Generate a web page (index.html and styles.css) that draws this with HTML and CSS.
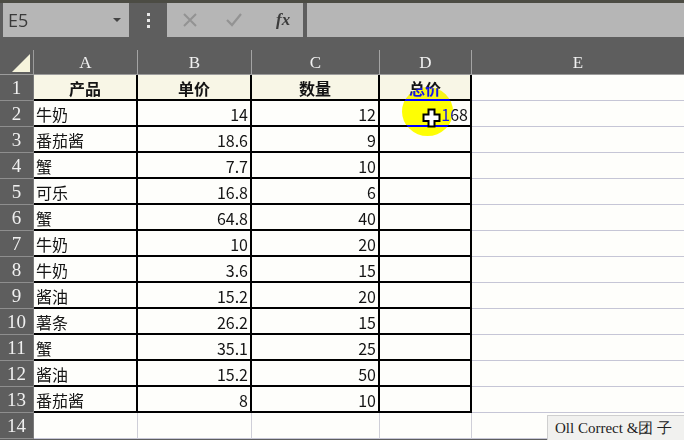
FILE: index.html
```html
<!DOCTYPE html>
<html>
<head>
<meta charset="utf-8">
<link rel="stylesheet" href="styles.css">
</head>
<body>
<div class="app">
  <div class="topbar">
    <div class="namebox"><span class="ref">E5</span><span class="caret"></span></div>
    <div class="grip"><i></i><i></i><i></i></div>
    <div class="fxbtns">
      <svg class="ic" width="20" height="20" viewBox="0 0 20 20"><path d="M4 4 L16 16 M16 4 L4 16" stroke="#939393" stroke-width="2" fill="none"/></svg>
      <svg class="ic" width="20" height="20" viewBox="0 0 20 20"><path d="M3 10 L8 15 L17 4" stroke="#939393" stroke-width="2.2" fill="none"/></svg>
      <span class="fx">fx</span>
    </div>
    <div class="finput"></div>
  </div>
  <div class="sheet">
    <div class="corner"><span class="tri"></span></div>
    <div class="ch">A</div><div class="ch">B</div><div class="ch">C</div><div class="ch">D</div><div class="ch last">E</div>

    <div class="rh">1</div><div class="c t h">产品</div><div class="c t h">单价</div><div class="c t h">数量</div><div class="c t h">总价</div><div class="c e"></div>
    <div class="rh">2</div><div class="c t">牛奶</div><div class="c t n">14</div><div class="c t n">12</div><div class="c t n">168</div><div class="c e"></div>
    <div class="rh">3</div><div class="c t">番茄酱</div><div class="c t n">18.6</div><div class="c t n">9</div><div class="c t n"></div><div class="c e"></div>
    <div class="rh">4</div><div class="c t">蟹</div><div class="c t n">7.7</div><div class="c t n">10</div><div class="c t n"></div><div class="c e"></div>
    <div class="rh">5</div><div class="c t">可乐</div><div class="c t n">16.8</div><div class="c t n">6</div><div class="c t n"></div><div class="c e"></div>
    <div class="rh">6</div><div class="c t">蟹</div><div class="c t n">64.8</div><div class="c t n">40</div><div class="c t n"></div><div class="c e"></div>
    <div class="rh">7</div><div class="c t">牛奶</div><div class="c t n">10</div><div class="c t n">20</div><div class="c t n"></div><div class="c e"></div>
    <div class="rh">8</div><div class="c t">牛奶</div><div class="c t n">3.6</div><div class="c t n">15</div><div class="c t n"></div><div class="c e"></div>
    <div class="rh">9</div><div class="c t">酱油</div><div class="c t n">15.2</div><div class="c t n">20</div><div class="c t n"></div><div class="c e"></div>
    <div class="rh">10</div><div class="c t">薯条</div><div class="c t n">26.2</div><div class="c t n">15</div><div class="c t n"></div><div class="c e"></div>
    <div class="rh">11</div><div class="c t">蟹</div><div class="c t n">35.1</div><div class="c t n">25</div><div class="c t n"></div><div class="c e"></div>
    <div class="rh">12</div><div class="c t">酱油</div><div class="c t n">15.2</div><div class="c t n">50</div><div class="c t n"></div><div class="c e"></div>
    <div class="rh">13</div><div class="c t">番茄酱</div><div class="c t n">8</div><div class="c t n">10</div><div class="c t n"></div><div class="c e"></div>
    <div class="rh">14</div><div class="c g"></div><div class="c g"></div><div class="c g"></div><div class="c g"></div><div class="c e"></div>
  </div>
  <div class="spot"></div>
  <svg class="cursor" width="19" height="20" viewBox="0 0 19 20"><path d="M6.5 1.5 H12.5 V6.5 H17.5 V13 H12.5 V18.5 H6.5 V13 H1.5 V6.5 H6.5 Z" fill="#fff" stroke="#000" stroke-width="2"/></svg>
  <div class="mark">Oll Correct &amp;团 子</div>
</div>
</body>
</html>
```
FILE: styles.css
```css
html, body { margin: 0; padding: 0; }
body { background: #5e5e5e; width: 684px; height: 440px; overflow: hidden; font-family: "Noto Sans CJK SC", "Noto Sans", sans-serif; }
.app { position: relative; width: 684px; height: 440px; }
.topbar { height: 50px; box-sizing: border-box; padding: 0 0 13px 3px; display: flex; border-top: 3px solid #4c4c44; background: #5e5e5e; }
.namebox { width: 126px; height: 34px; background: #b6b6b6; display: flex; align-items: center; justify-content: space-between; padding: 0 8px 0 5px; box-sizing: border-box; }
.ref { font-size: 18px; color: #3a3a3a; font-family: "Open Sans", sans-serif; }
.caret { width: 0; height: 0; border-left: 4px solid transparent; border-right: 4px solid transparent; border-top: 4px solid #444; }
.grip { width: 38px; display: flex; flex-direction: column; align-items: center; justify-content: center; gap: 3px; }
.grip i { display: block; width: 3px; height: 3px; background: #e8e8e8; }
.fxbtns { width: 136px; height: 34px; background: #b6b6b6; display: flex; align-items: center; padding-left: 13px; box-sizing: border-box; gap: 24px; }
.fx { font-family: "Liberation Serif", serif; font-style: italic; font-weight: bold; font-size: 17px; color: #3c3c3c; margin-left: 8px; }
.finput { flex: 1; margin-left: 4px; height: 34px; background: #b6b6b6; }
.sheet { display: grid; grid-template-columns: 34px 104px 114px 128px 92px 1fr; grid-template-rows: 25px repeat(14, 26px); }
.corner { background: #5e5e5e; border-right: 1px solid #9c9c9c; border-bottom: 1px solid #9c9c9c; position: relative; box-sizing: border-box; }
.tri { position: absolute; right: 3px; bottom: 2px; width: 0; height: 0; border-left: 18px solid transparent; border-bottom: 18px solid #f6f4dc; }
.ch { background: #5e5e5e; color: #f2f2f2; font-family: "Liberation Serif", serif; font-size: 17px; display: flex; align-items: flex-end; justify-content: center; padding-bottom: 1px; box-sizing: border-box; border-right: 1px solid #a4a4a4; border-bottom: 1px solid #9c9c9c; }
.ch.last { border-right: 0; }
.rh { background: #5e5e5e; color: #f0f0f0; font-family: "Liberation Serif", serif; font-size: 19px; display: flex; align-items: center; justify-content: center; box-sizing: border-box; border-bottom: 1px solid #8e8e8e; border-right: 1px solid #7a7a7a; }
.c { box-sizing: border-box; font-size: 16px; color: #141414; display: flex; align-items: center; padding: 1px 2px 0 2px; line-height: 1; background: #fefefb; white-space: nowrap; }
.t { border-right: 2px solid #000; border-bottom: 2px solid #000; }
.h { background: #f8f6e6; font-weight: bold; justify-content: center; }
.n { justify-content: flex-end; }
.e { border-bottom: 1px solid #c6c6d6; }
.g { border-right: 1px solid #cfcfd8; border-bottom: 1px solid #c6c6d6; }
.spot { position: absolute; left: 402px; top: 87px; width: 51px; height: 49px; border-radius: 50%; background: #0000ff; mix-blend-mode: difference; }
.cursor { position: absolute; left: 422px; top: 108px; }
.mark { position: absolute; left: 547px; top: 415px; width: 137px; height: 25px; box-sizing: border-box; background: #f1f1ef; border-left: 1px solid #cfcfcf; border-top: 1px solid #cfcfcf; font-family: "Liberation Serif", serif; font-size: 15px; color: #222; padding: 3px 0 0 7px; white-space: nowrap; }
```
